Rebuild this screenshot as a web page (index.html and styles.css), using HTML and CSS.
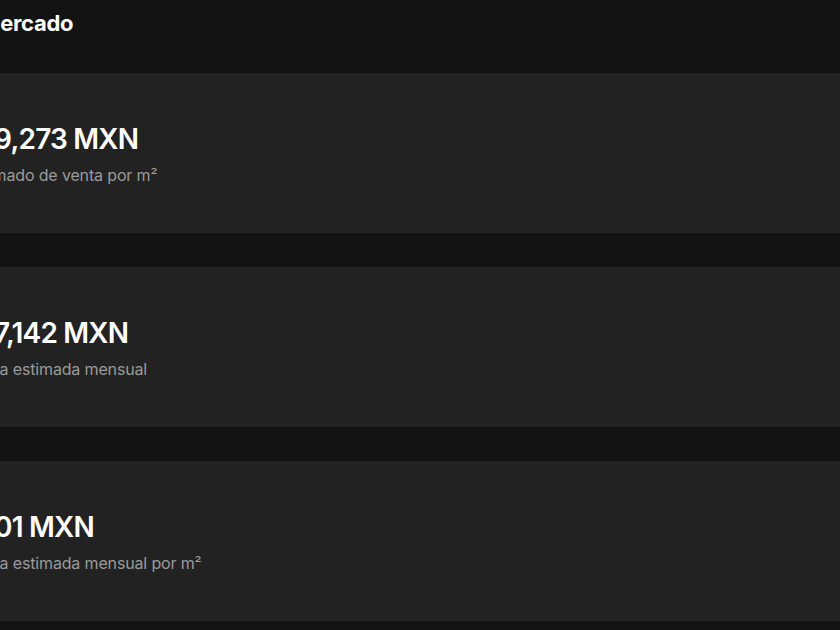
FILE: index.html
```html
<!DOCTYPE html>
<html lang="es">
<head>
<meta charset="utf-8">
<title>Mercado</title>
<link rel="stylesheet" href="styles.css">
</head>
<body>
<main class="page">
  <h2 class="section-title">Mercado</h2>
  <div class="stats">
    <section class="stat-card">
      <div class="stat-value">$29,273 MXN</div>
      <div class="stat-label">Estimado de venta por m²</div>
    </section>
    <section class="stat-card">
      <div class="stat-value">$27,142 MXN</div>
      <div class="stat-label">Renta estimada mensual</div>
    </section>
    <section class="stat-card">
      <div class="stat-value">$201 MXN</div>
      <div class="stat-label">Renta estimada mensual por m²</div>
    </section>
  </div>
</main>
</body>
</html>
```

FILE: styles.css
```css
html, body {
  margin: 0;
  padding: 0;
  background: #131313;
  overflow: hidden;
}
body {
  width: 840px;
  height: 630px;
  font-family: Inter, "Noto Sans", sans-serif;
  color: #ffffff;
}
.page {
  margin-left: -40px;
  width: 900px;
}
.section-title {
  margin: 0;
  padding: 8px 0 0 20px;
  height: 73px;
  box-sizing: border-box;
  font-size: 22px;
  font-weight: 700;
  line-height: 30px;
  letter-spacing: -0.3px;
}
.stats {
  display: flex;
  flex-direction: column;
  gap: 34px;
}
.stat-card {
  background: #222222;
  height: 160px;
  box-sizing: border-box;
  padding: 48px 0 0 8px;
}
.stat-value {
  margin-left: -8px;
  font-size: 28px;
  font-weight: 600;
  line-height: 36px;
  letter-spacing: -0.8px;
}
.stat-label {
  margin-top: 8px;
  margin-left: -2px;
  font-size: 16px;
  line-height: 20px;
  letter-spacing: -0.15px;
  color: #9a9a9a;
}
```
